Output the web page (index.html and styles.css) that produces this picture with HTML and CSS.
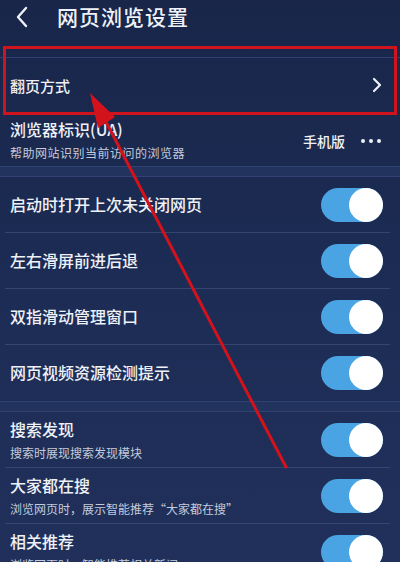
FILE: index.html
```html
<!DOCTYPE html>
<html lang="zh">
<head>
<meta charset="utf-8">
<link rel="stylesheet" href="styles.css">
</head>
<body>
<div class="screen">
  <div class="header">
    <svg class="back" width="14" height="22" viewBox="0 0 14 22"><path d="M11 2 L3 11 L11 20" fill="none" stroke="#eef1f7" stroke-width="2.4" stroke-linecap="round" stroke-linejoin="round"/></svg>
    <div class="title">网页浏览设置</div>
  </div>

  <div class="row row-nav">
    <div class="label">翻页方式</div>
    <svg class="chev" width="10" height="16" viewBox="0 0 10 16"><path d="M2 2 L8 8 L2 14" fill="none" stroke="#eef1f7" stroke-width="2.2" stroke-linecap="round" stroke-linejoin="round"/></svg>
  </div>

  <div class="row row-ua">
    <div class="texts">
      <div class="label">浏览器标识(UA)</div>
      <div class="sub ua-sub">帮助网站识别当前访问的浏览器</div>
    </div>
    <div class="value">手机版</div>
    <div class="dots"><span></span><span></span><span></span></div>
  </div>

  <div class="band"></div>

  <div class="row row-toggle div">
    <div class="label">启动时打开上次未关闭网页</div>
    <div class="toggle"><div class="knob"></div></div>
  </div>
  <div class="row row-toggle div">
    <div class="label">左右滑屏前进后退</div>
    <div class="toggle"><div class="knob"></div></div>
  </div>
  <div class="row row-toggle div">
    <div class="label">双指滑动管理窗口</div>
    <div class="toggle"><div class="knob"></div></div>
  </div>
  <div class="row row-toggle">
    <div class="label">网页视频资源检测提示</div>
    <div class="toggle"><div class="knob"></div></div>
  </div>

  <div class="band"></div>

  <div class="row row-toggle div">
    <div class="texts">
      <div class="label">搜索发现</div>
      <div class="sub">搜索时展现搜索发现模块</div>
    </div>
    <div class="toggle"><div class="knob"></div></div>
  </div>
  <div class="row row-toggle div">
    <div class="texts">
      <div class="label">大家都在搜</div>
      <div class="sub">浏览网页时，展示智能推荐“大家都在搜”</div>
    </div>
    <div class="toggle"><div class="knob"></div></div>
  </div>
  <div class="row row-toggle">
    <div class="texts">
      <div class="label">相关推荐</div>
      <div class="sub">浏览网页时，智能推荐相关新闻</div>
    </div>
    <div class="toggle"><div class="knob"></div></div>
  </div>

  <div class="highlight"></div>
  <svg class="arrow" width="400" height="562" viewBox="0 0 400 562">
    <line x1="286" y1="467" x2="104" y2="118" stroke="#d4121c" stroke-width="3" stroke-linecap="round"/>
    <polygon points="90,93 115,117 98,128" fill="#d4121c"/>
  </svg>
</div>
</body>
</html>
```

FILE: styles.css
```css
html, body {
  margin: 0;
  padding: 0;
}
body {
  background: #1b2a52;
  font-family: "Noto Sans CJK SC", "Noto Sans", sans-serif;
  color: #eef1f7;
}
.screen {
  position: relative;
  width: 400px;
  height: 562px;
  overflow: hidden;
  background: linear-gradient(#19264a, #1d2d56 60%, #20305a);
}
.header {
  height: 36px;
  margin-bottom: 21px;
  display: flex;
  align-items: center;
  padding-left: 15px;
}
.back {
  margin-top: -2px;
}
.title {
  margin-left: 28px;
  font-size: 21px;
  font-weight: 500;
  letter-spacing: 1px;
  line-height: 1;
  margin-top: -3px;
}
.row {
  display: flex;
  align-items: center;
  padding: 0 17px 0 10px;
  box-sizing: border-box;
  position: relative;
}
.label {
  font-size: 16px;
  font-weight: 500;
  line-height: 1.2;
}
.sub {
  font-size: 12px;
  line-height: 1.2;
  color: #c3cbdc;
  margin-top: 7px;
}
.ua-sub {
  letter-spacing: 0.5px;
}
.texts {
  flex: 1;
}
.row-nav {
  height: 55px;
  border-top: 1px solid #2f4170;
  justify-content: space-between;
  padding-right: 18px;
}
.row-nav .label {
  font-size: 15px;
  margin-top: 2px;
}
.row-ua {
  height: 54px;
  padding-top: 2px;
}
.row-ua .value {
  font-size: 14px;
  font-weight: 500;
  margin-right: 16px;
  margin-top: 2px;
}
.dots {
  display: flex;
  gap: 4px;
  margin-right: 2px;
  margin-top: 2px;
}
.dots span {
  width: 4px;
  height: 4px;
  border-radius: 50%;
  background: #eef1f7;
}
.band {
  height: 11px;
  background: #22335e;
  border-top: 1px solid #2f4272;
  border-bottom: 1px solid #2f4272;
  box-sizing: border-box;
}
.row-toggle {
  height: 56px;
}
.row-toggle .label {
  flex: 1;
}
.row-toggle .texts .label {
  flex: none;
}
.div::after {
  content: "";
  position: absolute;
  left: 5px;
  right: 10px;
  bottom: 0;
  height: 1px;
  background: #34466f;
}
.toggle {
  width: 62px;
  height: 34px;
  border-radius: 17px;
  background: #4aa3e2;
  position: relative;
  flex: none;
}
.knob {
  position: absolute;
  right: 0;
  top: 0;
  width: 34px;
  height: 34px;
  border-radius: 50%;
  background: #ffffff;
}
.highlight {
  position: absolute;
  left: 3px;
  top: 46px;
  width: 394px;
  height: 69px;
  border: 3px solid #cf141e;
  box-sizing: border-box;
}
.arrow {
  position: absolute;
  left: 0;
  top: 0;
}
```
